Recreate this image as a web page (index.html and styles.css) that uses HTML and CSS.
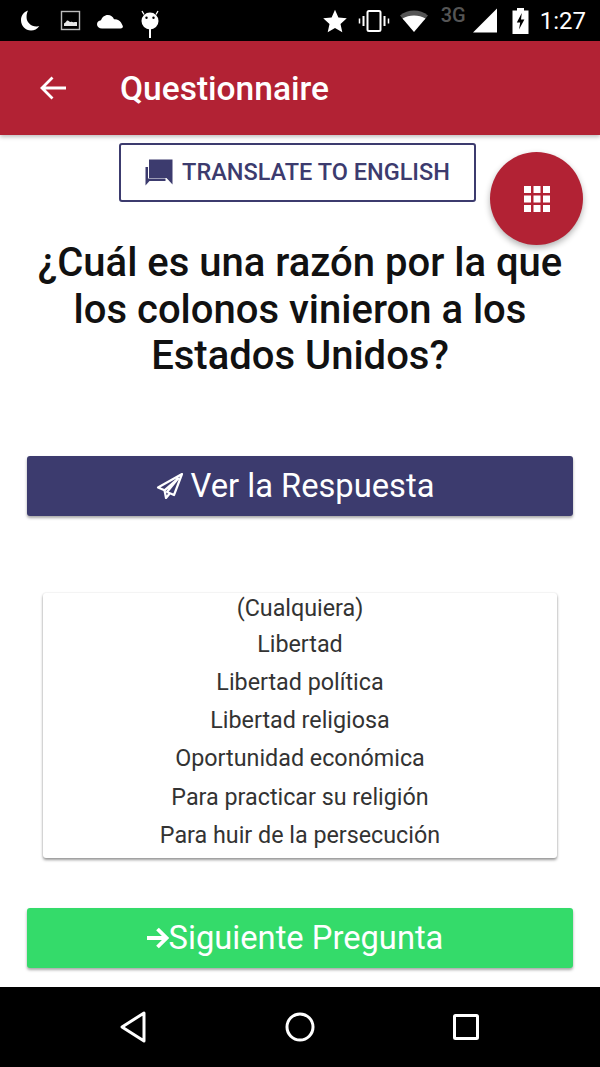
FILE: index.html
```html
<!DOCTYPE html>
<html lang="en">
<head>
    <meta charset="UTF-8">
    <meta name="viewport" content="width=device-width, initial-scale=1.0">
    <title>Questionnaire</title>
    <link rel="stylesheet" href="styles.css">
</head>
<body>
    <div id="app">
        <!-- Android status bar -->
        <div class="status-bar">
            <div class="status-left">
                <svg class="ico-moon" width="24" height="24" viewBox="0 0 24 24"><path fill="#fff" d="M10 1.500C5.600 3 3 6.800 3 11.200 3 16.900 7.500 21.500 13 21.500c3.300 0 6.300-1.500 8.300-4.500-1 .4-2 .5-3 .4C12.800 17.300 9 13.500 8.600 9c-.2-2.800.3-5.200 1.400-7.500z"/></svg>
                <svg class="ico-image" width="22" height="22" viewBox="0 0 22 22"><rect x="1.500" y="1.500" width="18" height="18" fill="none" stroke="#bdbdbd" stroke-width="1.400"/><path fill="#e8e8e8" d="M4 16v-2.500c1-.2 1.800-1.500 2.800-2.700.8-.8 1.500-.3 2.200.5.700.8 1.200.8 2 .5 1-.3 1.500 0 2.200.4.800.4 2-.3 3.800 0V16z"/></svg>
                <svg class="ico-cloud" width="28" height="18" viewBox="0 0 28 18"><path fill="#fff" d="M6 16.500c-3 0-5-1.800-5-4.200 0-2.200 1.700-3.800 4-4C6 5.300 8.500 3 11.800 3c3 0 5.300 1.700 6.200 4.200 3.200-.3 5.700 1 7 3.300.7 1.200 1.200 2.500 1.800 3.500.4 1.500-.6 2.500-2.300 2.500z"/></svg>
                <svg class="ico-android" width="22" height="30" viewBox="0 0 22 30"><path stroke="#fff" stroke-width="1.300" d="M5 5.500 3 2M17 5.500 19 2"/><circle cx="11" cy="12" r="8.500" fill="#fff"/><circle cx="7.500" cy="8.800" r="1.200" fill="#000"/><circle cx="14.500" cy="8.800" r="1.200" fill="#000"/><rect x="10" y="20" width="2" height="9" fill="#fff"/></svg>
            </div>
            <div class="status-right">
                <svg class="ico-star" width="24" height="24" viewBox="0 0 24 24"><path fill="#fff" d="M12 .8l3.400 7.700 8.400.8-6.300 5.600 1.800 8.300L12 18.900l-7.300 4.300 1.800-8.300L.2 9.300l8.400-.8z"/></svg>
                <svg class="ico-vibrate" width="32" height="24" viewBox="0 0 32 24"><rect x="9.500" y="2" width="13" height="20" rx="1.500" fill="none" stroke="#fff" stroke-width="2"/><path stroke="#fff" stroke-width="2" d="M5.500 7v10M26.500 7v10"/><path stroke="#fff" stroke-width="1.500" d="M1.500 9.500v5M30.500 9.500v5"/></svg>
                <svg class="ico-wifi" width="30" height="24" viewBox="0 0 30 24"><path fill="#555" d="M1 6.500C5 3 9.800 1.500 15 1.500s10 1.500 14 5l-3.800 4.500H4.800z"/><path fill="#fff" d="M3.500 9.500C6.800 7.500 10.800 6.500 15 6.500s8.200 1 11.500 3L15 23z"/></svg>
                <span class="net-type">3G</span>
                <svg class="ico-signal" width="25" height="25" viewBox="0 0 25 25"><path fill="#fff" d="M24 .5V24.500H0z"/></svg>
                <svg class="ico-battery" width="17" height="26" viewBox="0 0 17 26"><path fill="#fff" d="M5 0h7v2.500h4.500V26H.5V2.500H5z"/><path fill="#000" d="M9.800 5 4.800 14.500h3.400L7 21.500l5.400-10H9z"/></svg>
                <span class="clock">1:27</span>
            </div>
        </div>

        <header class="app-header">
            <svg class="back" width="30" height="30" viewBox="0 0 30 30"><path fill="none" stroke="#fff" stroke-width="2.800" d="M28 15H4M14.500 4.500 4 15l10.500 10.500"/></svg>
            <h1>Questionnaire</h1>
        </header>

        <main>
            <button class="translate-btn">
                <svg width="28" height="28" viewBox="0 0 28 28"><path fill="#3c3b6e" d="M4 1.500h23.500v25l-6-6.500H4z"/><path fill="#3c3b6e" d="M.5 9H3v11.500h17.500V23H4.500L.5 27.500z"/></svg>
                TRANSLATE TO ENGLISH
            </button>

            <button class="fab" aria-label="Menu">
                <svg width="26" height="26" viewBox="0 0 26 26"><g fill="#fff"><rect x="0" y="0" width="7" height="7"/><rect x="9.500" y="0" width="7" height="7"/><rect x="19" y="0" width="7" height="7"/><rect x="0" y="9.500" width="7" height="7"/><rect x="9.500" y="9.500" width="7" height="7"/><rect x="19" y="9.500" width="7" height="7"/><rect x="0" y="19" width="7" height="7"/><rect x="9.500" y="19" width="7" height="7"/><rect x="19" y="19" width="7" height="7"/></g></svg>
            </button>

            <h2 class="question">¿Cuál es una razón por la que los colonos vinieron a los Estados Unidos?</h2>

            <button class="action-btn answer-btn">
                <svg width="28" height="28" viewBox="0 0 28 28"><path fill="none" stroke="#fff" stroke-width="2.200" stroke-linejoin="round" d="M26 2 2 15.500l6.500 2.800L22 6.500 11 20l7 3z"/><path fill="none" stroke="#fff" stroke-width="2.200" stroke-linejoin="round" d="M8.500 18.300 10 26l3.500-4.300"/></svg>
                Ver la Respuesta
            </button>

            <div class="answer-card">
                <div class="answer-head">(Cualquiera)</div>
                <div class="answer-item">Libertad</div>
                <div class="answer-item">Libertad política</div>
                <div class="answer-item">Libertad religiosa</div>
                <div class="answer-item">Oportunidad económica</div>
                <div class="answer-item">Para practicar su religión</div>
                <div class="answer-item">Para huir de la persecución</div>
            </div>

            <button class="action-btn next-btn">
                <svg width="22" height="22" viewBox="0 0 22 22"><path fill="none" stroke="#fff" stroke-width="3.800" d="M0 11h19M10.500 2 19.500 11l-9 9"/></svg><span>Siguiente Pregunta</span>
            </button>
        </main>

        <!-- Android nav bar -->
        <div class="nav-bar">
            <svg width="30" height="34" viewBox="0 0 30 34"><path fill="none" stroke="#fff" stroke-width="3" stroke-linejoin="round" d="M26 3v28L4 17z"/></svg>
            <svg width="30" height="30" viewBox="0 0 30 30"><circle cx="15" cy="15" r="13" fill="none" stroke="#fff" stroke-width="3"/></svg>
            <svg width="28" height="28" viewBox="0 0 28 28"><rect x="2.500" y="2.500" width="23" height="23" rx="1" fill="none" stroke="#fff" stroke-width="3"/></svg>
        </div>
    </div>
</body>
</html>
```

FILE: styles.css
```css
/* Reset and base styles */
* {
    margin: 0;
    padding: 0;
    box-sizing: border-box;
}

body, html {
    width: 100%;
    height: 100%;
    font-family: Roboto, "Liberation Sans", sans-serif;
    background: #fff;
    overflow: hidden;
}

#app {
    width: 600px;
    height: 1067px;
    display: flex;
    flex-direction: column;
}

button {
    border: none;
    font-family: inherit;
}

/* Status bar */
.status-bar {
    height: 41px;
    flex: none;
    background: #000;
    display: flex;
    justify-content: space-between;
    align-items: center;
    padding: 0 14px 0 18px;
}

.status-left, .status-right {
    display: flex;
    align-items: center;
}

.status-left {
    gap: 15px;
}

.ico-image {
    margin-left: 3px;
}

.ico-cloud {
    margin-left: -1px;
}

.ico-android {
    margin-top: 7px;
}

.ico-star {
    margin-right: 11px;
}

.ico-vibrate {
    margin-right: 9px;
}

.ico-wifi {
    margin-right: 12px;
}

.net-type {
    color: #555;
    font-size: 20px;
    font-weight: 500;
    margin-right: 7px;
    margin-top: -11px;
}

.ico-signal {
    margin-right: 14px;
}

.ico-battery {
    margin-right: 11px;
}

.clock {
    color: #fff;
    font-size: 24px;
    font-weight: 400;
}

/* App bar */
.app-header {
    height: 94px;
    flex: none;
    background: #b22234;
    display: flex;
    align-items: center;
    padding-left: 38px;
    box-shadow: 0 2px 4px rgba(0, 0, 0, 0.25);
    position: relative;
    z-index: 2;
}

.app-header h1 {
    color: #fff;
    font-size: 33.500px;
    font-weight: 500;
    margin-left: 52px;
}

/* Content */
main {
    flex: 1;
    position: relative;
    display: flex;
    flex-direction: column;
    align-items: center;
    padding: 0 27px;
}

.translate-btn {
    width: 357px;
    height: 59px;
    flex: none;
    margin: 8px 5px 0 0;
    padding-bottom: 2px;
    background: #fff;
    border: 2px solid #3c3b6e;
    border-radius: 3px;
    color: #3c3b6e;
    font-size: 23.500px;
    font-weight: 500;
    display: flex;
    align-items: center;
    justify-content: center;
    gap: 9px;
}

.fab {
    position: absolute;
    top: 17px;
    left: 490px;
    width: 93px;
    height: 93px;
    border-radius: 50%;
    background: #b22234;
    display: flex;
    align-items: center;
    justify-content: center;
    box-shadow: 0 3px 6px rgba(0, 0, 0, 0.3);
}

.question {
    width: 546px;
    margin-top: 38px;
    font-size: 40px;
    line-height: 46.500px;
    font-weight: 500;
    color: #111;
    text-align: center;
}

.action-btn {
    width: 546px;
    height: 60px;
    flex: none;
    padding-top: 1px;
    border-radius: 3px;
    color: #fff;
    font-size: 32.700px;
    display: flex;
    align-items: center;
    justify-content: center;
    box-shadow: 0 2px 3px rgba(0, 0, 0, 0.35);
}

.answer-btn {
    background: #3c3b6e;
    margin-top: 76px;
    padding-right: 10px;
    gap: 7px;
}

.answer-card {
    width: 514px;
    height: 265px;
    flex: none;
    margin-top: 77px;
    background: #fff;
    border-radius: 3px;
    box-shadow: 0 2px 3px rgba(0, 0, 0, 0.4), 0 0 2px rgba(0, 0, 0, 0.12);
    text-align: center;
    color: #333;
    font-size: 23.300px;
}

.answer-head {
    height: 32px;
    line-height: 31px;
}

.answer-item {
    height: 38.300px;
    line-height: 38.300px;
}

.next-btn {
    background: #34db6a;
    margin-top: 50px;
    padding-right: 10px;
}

/* Nav bar */
.nav-bar {
    height: 80px;
    flex: none;
    background: #000;
    display: flex;
    align-items: center;
    padding-left: 118px;
    gap: 137px;
}
```
